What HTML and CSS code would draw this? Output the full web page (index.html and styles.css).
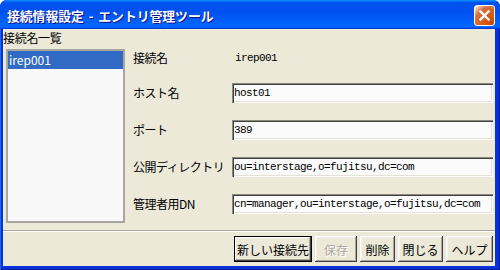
FILE: index.html
```html
<!DOCTYPE html>
<html lang="ja">
<head>
    <meta charset="UTF-8">
    <meta name="viewport" content="width=device-width, initial-scale=1.0">
    <title>接続情報設定 - エントリ管理ツール</title>
    <link rel="stylesheet" href="styles.css">
</head>
<body>

    <div class="window">
        <div class="title-bar">
            <span class="title-text">接続情報設定 - エントリ管理ツール</span>
            <button class="close-btn" aria-label="閉じる">
                <svg width="11" height="11" viewBox="0 0 11 11">
                    <path d="M1.5 1.5 L9.5 9.5 M9.5 1.5 L1.5 9.5" stroke="#fff" stroke-width="2.4" stroke-linecap="square"/>
                </svg>
            </button>
        </div>

        <div class="window-body">
            <div class="main">
                <div class="list-pane">
                    <div class="list-label">接続名一覧</div>
                    <ul class="listbox">
                        <li class="selected">irep001</li>
                    </ul>
                </div>

                <div class="form">
                    <div class="field-label">接続名</div>
                    <div class="field-value">irep001</div>

                    <label class="field-label" for="host">ホスト名</label>
                    <input class="field-input" id="host" type="text" value="host01">

                    <label class="field-label" for="port">ポート</label>
                    <input class="field-input" id="port" type="text" value="389">

                    <label class="field-label" for="basedn">公開ディレクトリ</label>
                    <input class="field-input" id="basedn" type="text" value="ou=interstage,o=fujitsu,dc=com">

                    <label class="field-label" for="admindn">管理者用DN</label>
                    <input class="field-input" id="admindn" type="text" value="cn=manager,ou=interstage,o=fujitsu,dc=com">
                </div>
            </div>

            <div class="separator"></div>

            <div class="buttons">
                <button class="btn btn-default btn-new">新しい接続先</button>
                <button class="btn btn-save" disabled>保存</button>
                <button class="btn btn-delete">削除</button>
                <button class="btn btn-close">閉じる</button>
                <button class="btn btn-help">ヘルプ</button>
            </div>
        </div>
    </div>

</body>
</html>
```

FILE: styles.css
```css
body {
    margin: 0;
    padding: 0;
    background: #fff;
    font-family: "Noto Sans CJK JP", sans-serif;
    color: #000;
}

.window {
    width: 500px;
    height: 270px;
    display: flex;
    flex-direction: column;
    background: #0831d9;
    border-radius: 7px 7px 0 0;
    box-shadow: inset 1px 0 #166aee, inset -1px -1px #001ea0;
    overflow: hidden;
}

.title-bar {
    height: 29px;
    flex-shrink: 0;
    display: flex;
    align-items: center;
    justify-content: space-between;
    padding: 0 5px 0 7px;
    background: linear-gradient(180deg, #0997ff, #0053ee 8%, #0050ee 40%, #06f 88%, #06f 93%, #005bff 95%, #003dd7 96%, #003dd7);
}

.title-text {
    color: #fff;
    font-weight: bold;
    font-size: 12.8px;
    line-height: 16px;
    padding-top: 2px;
    word-spacing: 2px;
    text-shadow: 1px 1px #0f1089;
}

.close-btn {
    width: 21px;
    height: 21px;
    padding: 0;
    border: 1px solid #fff;
    border-radius: 3px;
    background: radial-gradient(circle at 90% 90%, #cc4600 0, #dc6527 55%, #cd7546 70%, #ffccb2 90%, #fff 100%);
    display: flex;
    align-items: center;
    justify-content: center;
    margin-top: 1px;
}

.window-body {
    flex: 1;
    margin: 0 5px 4px 3px;
    background: #ece9d8;
    display: flex;
    flex-direction: column;
}

.main {
    height: 201px;
    display: flex;
}

.list-pane {
    width: 122px;
    display: flex;
    flex-direction: column;
}

.list-label {
    font-size: 12px;
    line-height: 16px;
    padding-top: 1px;
    letter-spacing: -0.3px;
}

.listbox {
    list-style: none;
    margin: 3px 0 0 3px;
    padding: 0;
    height: 174px;
    box-sizing: border-box;
    border: 2px solid #a7a6a0;
    background: #f8f8f8;
}

.listbox li {
    height: 18px;
    line-height: 18px;
    font-size: 12px;
    padding-left: 1px;
}

.listbox li.selected {
    background: #316ac5;
    color: #fff;
}

.form {
    flex: 1;
    margin: 0 2px 0 8px;
    padding-top: 20px;
    display: grid;
    grid-template-columns: 99px 1fr;
    grid-template-rows: 17px repeat(4, 20px);
    row-gap: 17px;
    align-items: center;
}

.field-label {
    font-size: 12px;
    line-height: 16px;
    letter-spacing: -0.5px;
    white-space: nowrap;
}

.field-value {
    font-family: "Liberation Mono", monospace;
    font-size: 11px;
    letter-spacing: -0.6px;
    padding-left: 3px;
}

.field-input {
    height: 20px;
    box-sizing: border-box;
    border: none;
    margin: 0;
    padding: 0 2px;
    background: #fbfbfb;
    font-family: "Liberation Mono", monospace;
    font-size: 11px;
    letter-spacing: -0.6px;
    color: #000;
    box-shadow: inset 1px 1px #8a8a80, inset 2px 2px #404040, inset -1px -1px #fff, inset -2px -2px #e4e2d6;
    outline: none;
}

.separator {
    border-top: 1px solid #aca899;
    border-bottom: 1px solid #fff;
}

.buttons {
    display: flex;
    justify-content: flex-end;
    gap: 3px;
    padding: 4px 2px 0 0;
}

.btn {
    height: 26px;
    padding: 0;
    border: none;
    background: #ece9d8;
    font-family: "Noto Sans CJK JP", sans-serif;
    font-size: 12px;
    color: #000;
    box-shadow: inset -1px -1px #404040, inset 1px 1px #fff, inset -2px -2px #aca899, inset 2px 2px #f4f2e8;
}

.btn-default {
    box-shadow: inset 0 0 0 1px #000, inset -2px -2px #404040, inset 2px 2px #fff, inset -3px -3px #aca899;
}

.btn:disabled {
    color: #aca899;
    text-shadow: 1px 1px #fff;
}

.btn-new { width: 78px; }
.btn-save { width: 42px; }
.btn-delete { width: 35px; }
.btn-close { width: 45px; }
.btn-help { width: 47px; }
```
